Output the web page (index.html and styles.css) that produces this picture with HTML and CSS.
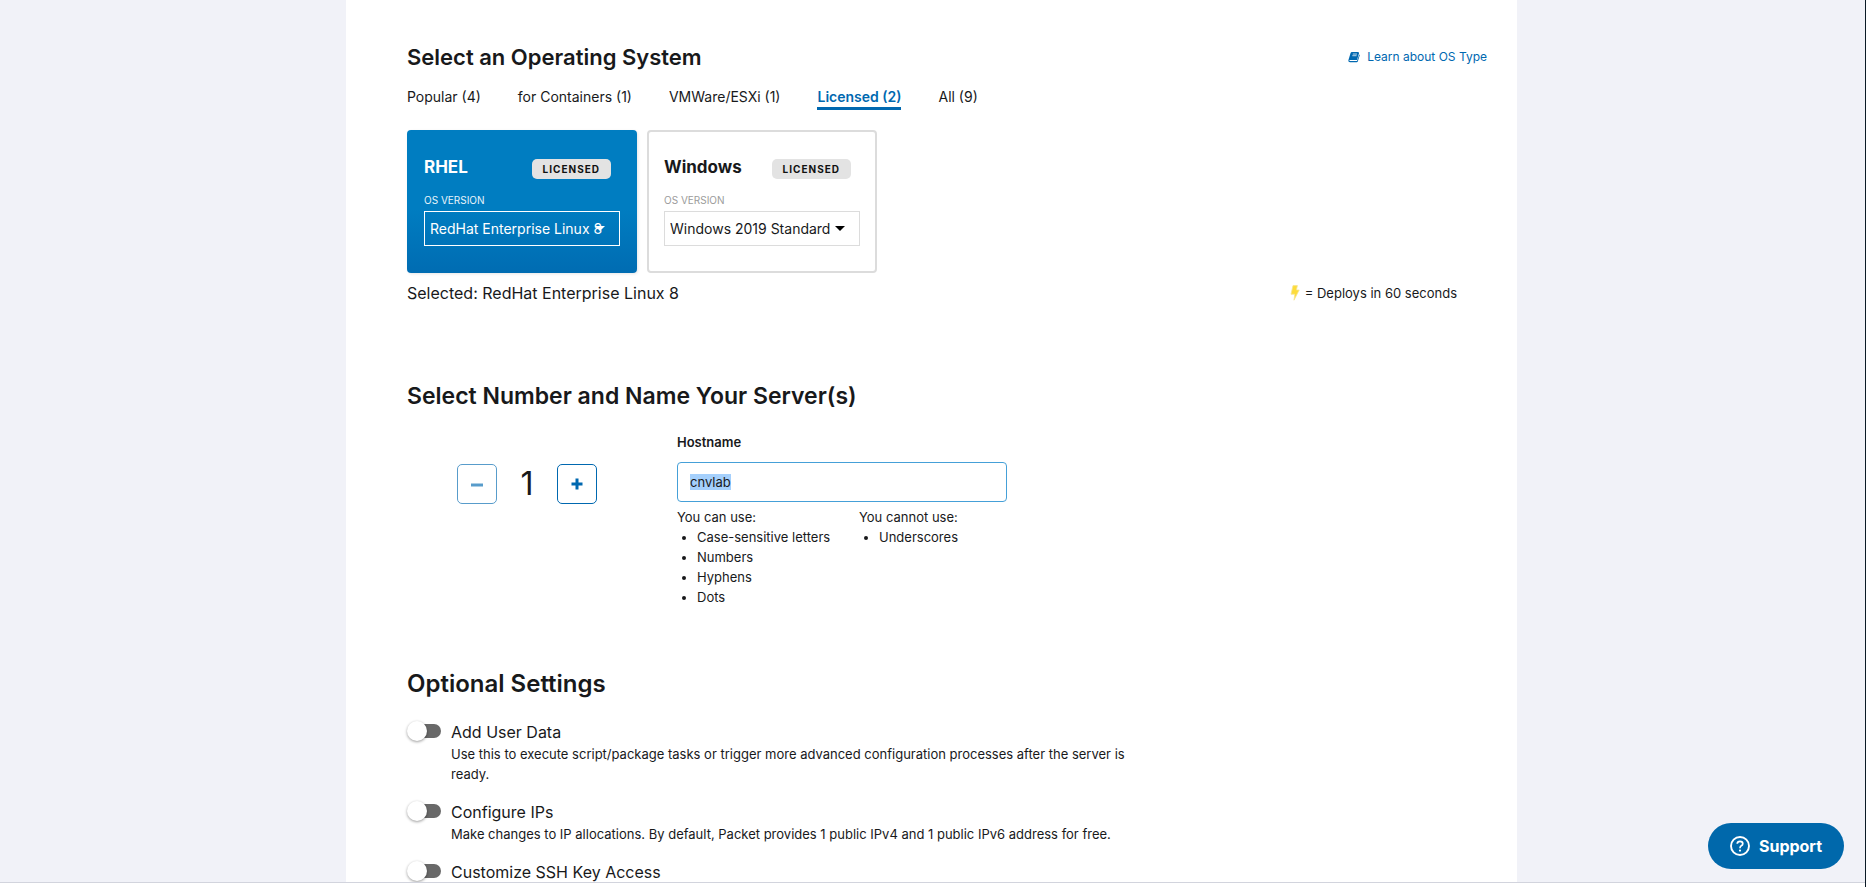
FILE: index.html
```html
<!DOCTYPE html>
<html lang="en">
<head>
<meta charset="utf-8">
<title>Deploy a Server</title>
<link rel="stylesheet" href="styles.css">
</head>
<body>
<div class="page">
  <main class="panel">
    <section class="section section-os">
      <header class="section-head">
        <h2 class="title title-os">Select an Operating System</h2>
        <a class="learn" href="#os-type">
          <svg width="12" height="12" viewBox="0 0 13 12" aria-hidden="true">
            <path d="M4.2 .6 H11.2 L12 1.8 L9.8 9.2 H1.8 Q1 10.2 2 10.4 H9.8 L12.2 3.2 L12.8 3.8 L10.6 10.8 Q10.4 11.6 9.4 11.6 H2.2 Q.1 11.4.4 9.4 L2.8 1.6 Q3.2 .6 4.2 .6 Z" fill="#0068b0"/>
            <path d="M5.2 2.8 H9.8 M4.7 4.6 H9.3" stroke="#fff" stroke-width=".8"/>
          </svg>
          <span>Learn about OS Type</span>
        </a>
      </header>
      <nav class="tabs">
        <a class="tab" href="#popular">Popular (4)</a>
        <a class="tab" href="#containers">for Containers (1)</a>
        <a class="tab" href="#vmware">VMWare/ESXi (1)</a>
        <a class="tab tab-active" href="#licensed">Licensed (2)</a>
        <a class="tab" href="#all">All (9)</a>
      </nav>
      <div class="cards">
        <article class="card card-selected">
          <div class="card-head"><h3 class="card-name">RHEL</h3><span class="badge">LICENSED</span></div>
          <label class="card-label" for="rhel">OS VERSION</label>
          <div class="picker">
            <select class="select" id="rhel"><option>RedHat Enterprise Linux 8</option></select>
          </div>
        </article>
        <article class="card">
          <div class="card-head"><h3 class="card-name">Windows</h3><span class="badge">LICENSED</span></div>
          <label class="card-label" for="windows">OS VERSION</label>
          <div class="picker">
            <select class="select" id="windows"><option>Windows 2019 Standard</option></select>
          </div>
        </article>
      </div>
      <div class="summary">
        <p class="chosen">Selected: RedHat Enterprise Linux 8</p>
        <p class="deploys">
          <svg width="10" height="16" viewBox="0 0 10 16" aria-hidden="true"><path d="M3 .6 H7.4 L6.4 5 H9.2 L4 15.2 L4.8 9.2 H1 Z" fill="#fddc3a" stroke="#f6e48e" stroke-width=".8"/></svg>
          <span>= Deploys in 60 seconds</span>
        </p>
      </div>
    </section>

    <section class="section section-name">
      <h2 class="title title-name">Select Number and Name Your Server(s)</h2>
      <div class="naming">
        <div class="counter">
          <button class="step step-off" type="button" aria-label="Fewer servers"><svg width="12" height="12" viewBox="0 0 12 12"><path d="M0 7 H12" stroke="currentColor" stroke-width="3"/></svg></button>
          <output class="count">1</output>
          <button class="step" type="button" aria-label="More servers"><svg width="12" height="12" viewBox="0 0 12 12"><path d="M0.5 6 H11.5 M6 .5 V11.5" stroke="currentColor" stroke-width="3"/></svg></button>
        </div>
        <div class="host">
          <label class="host-label" for="hostname">Hostname</label>
          <input class="host-input" id="hostname" type="text" value="cnvlab" autocomplete="off" spellcheck="false">
          <div class="rules">
            <div>
              <p>You can use:</p>
              <ul class="rule-list"><li>Case-sensitive letters</li><li>Numbers</li><li>Hyphens</li><li>Dots</li></ul>
            </div>
            <div>
              <p>You cannot use:</p>
              <ul class="rule-list"><li>Underscores</li></ul>
            </div>
          </div>
        </div>
      </div>
    </section>

    <section class="section section-optional">
      <h2 class="title">Optional Settings</h2>
      <div class="setting">
        <input class="toggle" type="checkbox" role="switch" id="user-data">
        <div class="setting-text">
          <label class="setting-name" for="user-data">Add User Data</label>
          <p>Use this to execute script/package tasks or trigger more advanced configuration processes after the server is ready.</p>
        </div>
      </div>
      <div class="setting">
        <input class="toggle" type="checkbox" role="switch" id="ips">
        <div class="setting-text">
          <label class="setting-name" for="ips">Configure IPs</label>
          <p>Make changes to IP allocations. By default, Packet provides 1 public IPv4 and 1 public IPv6 address for free.</p>
        </div>
      </div>
      <div class="setting">
        <input class="toggle" type="checkbox" role="switch" id="ssh">
        <div class="setting-text">
          <label class="setting-name" for="ssh">Customize SSH Key Access</label>
        </div>
      </div>
    </section>
  </main>
</div>
<footer class="bar"></footer>
<button class="support" type="button">
  <svg width="20" height="20" viewBox="0 0 20 20" fill="none" stroke="#fff" aria-hidden="true"><circle cx="10" cy="10" r="9" stroke-width="1.9"/><path d="M7.2 7.8 Q7.4 5.4 10 5.4 Q12.8 5.4 12.8 7.8 Q12.8 9.2 11 10 Q10 10.6 10 12.2" stroke-width="1.7"/><circle cx="10" cy="14.6" r="1.1" fill="#fff" stroke="none"/></svg>
  <span>Support</span>
</button>
<script src="script.js"></script>
</body>
</html>
```
FILE: styles.css
```css
* { box-sizing: border-box; }
body, h2, h3, p, ul { margin: 0; padding: 0; }
body {
  height: 100vh;
  display: flex;
  flex-direction: column;
  overflow: hidden;
  border-right: 1px solid #0b1a26;
  background: #f1f2f8;
  color: #18191b;
  font: 13px/20px Inter, "Liberation Sans", sans-serif;
}
svg { display: block; flex: none; }
a { text-decoration: none; }
button, input, select { font: inherit; }
.page { flex: 1; min-height: 0; overflow: hidden; padding: 0 348px 0 346px; }
.panel { min-height: 100%; background: #fff; padding: 42px 60px 0 61px; }
.bar { height: 5px; flex: none; background: #fff; border-top: 1px solid #d2d4dd; }
.title { font-size: 24px; line-height: 30px; font-weight: 600; }
.title-os { font-size: 22px; }
.title-name { font-size: 23px; }

.section-head { display: flex; justify-content: space-between; align-items: center; margin-right: -30px; }
.learn { display: flex; align-items: center; gap: 7px; color: #0068b0; font-size: 12px; }
.tabs { display: flex; gap: 37px; margin-top: 14px; }
.tab { color: #18191b; font-size: 14px; line-height: 21px; border-bottom: 3px solid transparent; }
.tab-active { color: #0068b0; border-color: #0068b0; font-weight: 600; }

.cards { display: flex; gap: 10px; margin-top: 20px; }
.card { width: 230px; height: 143px; padding: 23px 15px; border: 2px solid #dcdcdc; border-radius: 4px; background: #fff; }
.card-selected { border: 0; padding: 25px 17px; color: #fff; background: linear-gradient(#007dc1 55%, #006cb2); box-shadow: 1px 1px 3px rgba(0, 0, 0, .1); }
.card-head { display: flex; justify-content: space-between; align-items: center; padding-right: 9px; }
.card-name { font-size: 17px; line-height: 22px; font-weight: 700; }
.badge { margin-top: 4px; padding: 0 11px; border-radius: 5px; background: #e3e3e3; color: #111; font-size: 10px; line-height: 20px; font-weight: 700; letter-spacing: 1px; }
.card-label { display: block; margin-top: 13px; font-size: 10px; line-height: 16px; color: #9b9b9b; }
.card-selected .card-label { color: #e8f4fb; }
.picker { position: relative; margin-top: 3px; }
.picker::after { content: ""; position: absolute; right: 15px; top: 15px; border: 5px solid transparent; border-top-color: #000; border-bottom: 0; pointer-events: none; }
.select { appearance: none; display: block; width: 100%; height: 35px; padding: 0 5px; border: 1px solid #dcdcdc; border-radius: 0; background: transparent; color: #18191b; font-size: 14px; }
.card-selected .select { color: #fff; border-color: #fff; }
.card-selected .picker::after { border-top-color: #fff; }
.summary { display: flex; justify-content: space-between; align-items: center; margin-top: 9px; }
.chosen { font-size: 16px; line-height: 22px; }
.deploys { display: flex; align-items: center; gap: 5px; font-size: 13px; }

.section-name { margin-top: 77px; }
.naming { display: flex; gap: 80px; margin-top: 21px; padding-left: 50px; }
.counter { display: flex; align-self: flex-start; margin-top: 32px; }
.step { width: 40px; height: 40px; display: flex; align-items: center; justify-content: center; padding: 0; border: 1px solid #0068b0; border-radius: 5px; background: #fff; color: #0068b0; }
.step-off { opacity: .65; }
.count { width: 60px; text-align: center; font-size: 32px; line-height: 40px; font-weight: 400; }
.host { width: 330px; }
.host-label { display: block; font-weight: 600; }
.host-input { display: block; width: 100%; height: 40px; margin-top: 10px; padding: 0 12px; border: 1px solid #45a0d8; border-radius: 4px; outline: 0; color: #18191b; background: #fff; }
.host-input::selection { background: #a5d0fc; color: #18191b; }
.rules { display: grid; grid-template-columns: 182px 1fr; margin-top: 5px; }
.rule-list { padding-left: 20px; }

.section-optional { margin-top: 62px; }
.section-optional .title { margin-bottom: 22px; }
.setting { display: flex; gap: 10px; max-width: 724px; margin-bottom: 17px; }
.toggle { appearance: none; position: relative; flex: none; width: 34px; height: 20px; margin: 0; }
.toggle::before { content: ""; position: absolute; inset: 3px 0 3px 4px; border-radius: 7px; background: #696969; }
.toggle::after { content: ""; position: absolute; left: 0; top: 0; width: 20px; height: 20px; border-radius: 50%; background: #fff; box-shadow: 0 1px 3px rgba(0, 0, 0, .4); }
.setting-name { display: block; font-size: 16px; line-height: 23px; }

.support { position: fixed; right: 22px; bottom: 18px; display: flex; align-items: center; justify-content: center; gap: 9px; width: 136px; height: 46px; padding: 0; border: 0; border-radius: 23px; background: #0068ab; color: #fff; font-size: 16px; font-weight: 700; }
```
FILE: script.js
```
const hostname = document.getElementById("hostname");
hostname.focus({ preventScroll: true });
hostname.select();
```
